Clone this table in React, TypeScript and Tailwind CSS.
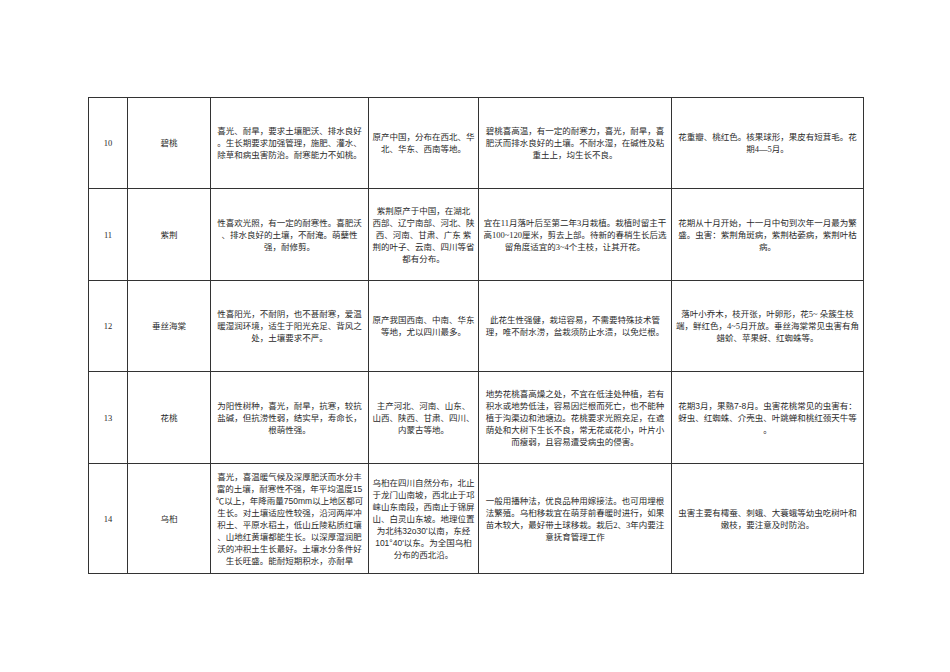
import React from "react";

type Row = {
  no: string;
  name: string;
  cells: React.ReactNode[][];
  h: string;
};

const A = ({ children }: { children: React.ReactNode }) => (
  <span className="font-['Liberation_Sans','Noto_Sans_CJK_SC',sans-serif]">{children}</span>
);

const rows: Row[] = [
  {
    no: "10",
    name: "碧桃",
    h: "h-[91px]",
    cells: [
      ["喜光、耐旱，要求土壤肥沃、排水良好", "。生长期要求加强管理，施肥、灌水、", "除草和病虫害防治。耐寒能力不如桃。"],
      ["原产中国，分布在西北、华", "北、华东、西南等地。"],
      ["碧桃喜高温，有一定的耐寒力，喜光，耐旱，喜", "肥沃而排水良好的土壤。不耐水湿，在碱性及粘", "重土上，均生长不良。"],
      ["花重瓣、桃红色。核果球形，果皮有短茸毛。花", "期4—5月。"],
    ],
  },
  {
    no: "11",
    name: "紫荆",
    h: "h-[92px]",
    cells: [
      ["性喜欢光照，有一定的耐寒性。喜肥沃", "、排水良好的土壤，不耐淹。萌蘖性", "强，耐修剪。"],
      ["紫荆原产于中国，在湖北", "西部、辽宁南部、河北、陕", "西、河南、甘肃、广东 紫", "荆的叶子、云南、四川等省", "都有分布。"],
      ["宜在11月落叶后至第二年3月栽植。栽植时留主干", "高100~120厘米，剪去上部。待新的春梢生长后选", "留角度适宜的3~4个主枝，让其开花。"],
      ["花期从十月开始，十一月中旬到次年一月最为繁", "盛。虫害：紫荆角斑病，紫荆枯萎病，紫荆叶枯", "病。"],
    ],
  },
  {
    no: "12",
    name: "垂丝海棠",
    h: "h-[91px]",
    cells: [
      ["性喜阳光，不耐阴，也不甚耐寒，爱温", "暖湿润环境，适生于阳光充足、背风之", "处，土壤要求不严。"],
      ["原产我国西南、中南、华东", "等地，尤以四川最多。"],
      ["此花生性强健，栽培容易，不需要特殊技术管", "理，唯不耐水涝，盆栽须防止水渍，以免烂根。"],
      ["落叶小乔木，枝开张，叶卵形，花5~ 朵簇生枝", "端，鲜红色，4~5月开放。垂丝海棠常见虫害有角", "蜡蚧、苹果蚜、红蜘蛛等。"],
    ],
  },
  {
    no: "13",
    name: "花桃",
    h: "h-[92px]",
    cells: [
      ["为阳性树种，喜光，耐旱，抗寒，较抗", "盐碱，但抗涝性弱，结实早，寿命长，", "根萌性强。"],
      ["主产河北、河南、山东、", "山西、陕西、甘肃、四川、", "内蒙古等地。"],
      [
        "地势花桃喜高燥之处，不宜在低洼处种植，若有",
        "积水或地势低洼，容易因烂根而死亡，也不能种",
        "植于沟渠边和池塘边。花桃要求光照充足，在遮",
        "荫处和大树下生长不良，常无花或花小，叶片小",
        "而瘦弱，且容易遭受病虫的侵害。",
      ],
      [
        <>花期<A>3</A>月，果熟<A>7-8</A>月。虫害花桃常见的虫害有：</>,
        "蚜虫、红蜘蛛、介壳虫、叶跳蝉和桃红颈天牛等",
        "。",
      ],
    ],
  },
  {
    no: "14",
    name: "乌桕",
    h: "h-[110px]",
    cells: [
      [
        "喜光，喜温暖气候及深厚肥沃而水分丰",
        <>富的土壤，耐寒性不强，年平均温度<A>15</A></>,
        <>℃以上，年降雨量<A>750mm</A>以上地区都可</>,
        "生长。对土壤适应性较强，沿河两岸冲",
        "积土、平原水稻土，低山丘陵粘质红壤",
        "、山地红黄壤都能生长。以深厚湿润肥",
        "沃的冲积土生长最好。土壤水分条件好",
        "生长旺盛。能耐短期积水，亦耐旱",
      ],
      [
        "乌桕在四川自然分布，北止",
        "于龙门山南坡，西北止于邛",
        "崃山东南段，西南止于锦屏",
        "山、白灵山东坡。地理位置",
        <>为北纬<A>32o30'</A>以南，东经</>,
        <><A>101°40'</A>以东。为全国乌桕</>,
        "分布的西北沿。",
      ],
      [
        "一般用播种法，优良品种用嫁接法。也可用埋根",
        "法繁殖。乌桕移栽宜在萌芽前春暖时进行，如果",
        "苗木较大，最好带土球移栽。栽后2、3年内要注",
        "意抚育管理工作",
      ],
      ["虫害主要有樗蚕、刺蛾、大蓑蛾等幼虫吃树叶和", "嫩枝，要注意及时防治。"],
    ],
  },
];

const td = "border border-[#333] align-middle text-center p-0";

export default function App() {
  return (
    <div className="w-[950px] h-[672px] bg-white pt-[97px] pl-[88px] text-[#2a2a2a] text-[8.5px] leading-[12px] font-['Liberation_Serif','Noto_Sans_CJK_SC',serif]">
      <table className="table-fixed border-collapse w-[775px]">
        <colgroup>
          <col className="w-[39px]" />
          <col className="w-[83px]" />
          <col className="w-[158px]" />
          <col className="w-[110px]" />
          <col className="w-[193px]" />
          <col className="w-[192px]" />
        </colgroup>
        <tbody>
          {rows.map((r) => (
            <tr key={r.no} className={r.h}>
              <td className={td}>{r.no}</td>
              <td className={td}>{r.name}</td>
              {r.cells.map((lines, i) => (
                <td key={i} className={td}>
                  {lines.map((l, j) => (
                    <span key={j} className="block whitespace-pre">
                      {l}
                    </span>
                  ))}
                </td>
              ))}
            </tr>
          ))}
        </tbody>
      </table>
    </div>
  );
}
